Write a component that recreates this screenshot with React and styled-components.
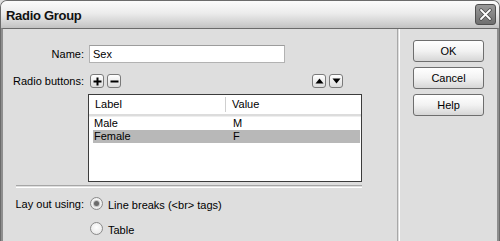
import React from 'react'
import styled, { createGlobalStyle, css } from 'styled-components'

const GlobalStyle = createGlobalStyle`
html, body {
    margin: 0;
    padding: 0;
    background: #dedede;
}
body {
    font-family: "Liberation Sans", Arial, sans-serif;
    font-size: 11px;
    color: #000;
}
`

const rows = [
    { label: 'Male', value: 'M' },
    { label: 'Female', value: 'F', selected: true },
]

const App = () => {
    return (
        <Window>
            <GlobalStyle />
            <TitleBar>
                <Title>Radio Group</Title>
                <CloseButton>
                    <svg width="13" height="13" viewBox="0 0 13 13">
                        <path d="M2 2 L11 11 M11 2 L2 11" stroke="#4a4a4a" strokeWidth="3.4" strokeLinecap="round" />
                        <path d="M2 2 L11 11 M11 2 L2 11" stroke="#fff" strokeWidth="1.8" strokeLinecap="round" />
                    </svg>
                </CloseButton>
            </TitleBar>
            <Body>
                <Main>
                    <FieldRow>
                        <Label>Name:</Label>
                        <TextInput value="Sex" readOnly />
                    </FieldRow>
                    <FieldRow $top={11}>
                        <Label>Radio buttons:</Label>
                        <Tools>
                            <ToolButton>
                                <svg width="9" height="9" viewBox="0 0 9 9">
                                    <path d="M4.5 0.5 V8.5 M0.5 4.5 H8.5" stroke="#000" strokeWidth="2" />
                                </svg>
                            </ToolButton>
                            <ToolButton>
                                <svg width="9" height="9" viewBox="0 0 9 9">
                                    <path d="M0.5 4.5 H8.5" stroke="#000" strokeWidth="2" />
                                </svg>
                            </ToolButton>
                            <ToolSpacer />
                            <ToolButton>
                                <svg width="9" height="6" viewBox="0 0 9 6">
                                    <path d="M0.5 5.5 L4.5 0.5 L8.5 5.5 Z" fill="#000" />
                                </svg>
                            </ToolButton>
                            <ToolButton>
                                <svg width="9" height="6" viewBox="0 0 9 6">
                                    <path d="M0.5 0.5 L4.5 5.5 L8.5 0.5 Z" fill="#000" />
                                </svg>
                            </ToolButton>
                        </Tools>
                    </FieldRow>
                    <ListBox>
                        <ListHeader>
                            <HeaderCell $width={137}>Label</HeaderCell>
                            <HeaderCell>Value</HeaderCell>
                        </ListHeader>
                        {rows.map(row => (
                            <ListRow key={row.label} $selected={row.selected}>
                                <Cell $width={139}>{row.label}</Cell>
                                <Cell>{row.value}</Cell>
                            </ListRow>
                        ))}
                    </ListBox>
                    <Divider />
                    <OptionRow $top={9}>
                        <Label>Lay out using:</Label>
                        <Radio $checked />
                        <OptionText>Line breaks (&lt;br&gt; tags)</OptionText>
                    </OptionRow>
                    <OptionRow $top={12}>
                        <Label />
                        <Radio />
                        <OptionText>Table</OptionText>
                    </OptionRow>
                </Main>
                <VSeparator />
                <Side>
                    <DialogButton>OK</DialogButton>
                    <DialogButton>Cancel</DialogButton>
                    <DialogButton>Help</DialogButton>
                </Side>
            </Body>
        </Window>
    )
}

export default App

const Window = styled.div`
width: 500px;
height: 241px;
box-sizing: border-box;
border: 1px solid #6b6b6b;
border-bottom: none;
border-radius: 7px 7px 0 0;
overflow: hidden;
display: flex;
flex-direction: column;
background: #dedede;
`
const TitleBar = styled.div`
height: 27px;
flex-shrink: 0;
display: flex;
align-items: center;
justify-content: space-between;
padding: 0 3px 0 5px;
background: linear-gradient(#fbfbfb, #ececec 45%, #cfcfcf 85%, #c2c2c2);
`
const Title = styled.div`
font-weight: bold;
font-size: 13px;
letter-spacing: -0.3px;
color: #111;
margin-top: 1px;
`
const CloseButton = styled.div`
width: 21px;
height: 21px;
box-sizing: border-box;
border: 1px solid #4f4f4f;
border-radius: 3px;
background: linear-gradient(#9a9a9a, #6f6f6f);
display: flex;
align-items: center;
justify-content: center;
`
const Body = styled.div`
flex: 1;
display: flex;
border-top: 1px solid #6b6b6b;
border-left: 2px solid #8e8e8e;
border-right: 2px solid #8e8e8e;
`
const Main = styled.div`
width: 394px;
padding-top: 16px;
display: flex;
flex-direction: column;
`
const rowBase = css`
display: flex;
align-items: center;
margin-top: ${p => p.$top || 0}px;
`
const FieldRow = styled.div`
${rowBase}
`
const OptionRow = styled.div`
${rowBase}
height: 13px;
`
const Label = styled.div`
width: 81px;
flex-shrink: 0;
text-align: right;
margin-right: 4px;
white-space: nowrap;
`
const TextInput = styled.input`
width: 196px;
height: 18px;
box-sizing: border-box;
margin: 0 0 0 1px;
padding: 0 3px;
border: 1px solid #b2b2b2;
border-top-color: #9c9c9c;
background: #fff;
font: inherit;
outline: none;
`
const Tools = styled.div`
width: 253px;
display: flex;
gap: 3px;
margin-left: 2px;
`
const ToolSpacer = styled.div`
flex: 1;
`
const ToolButton = styled.div`
width: 14px;
height: 14px;
box-sizing: border-box;
border: 1px solid #7a7a7a;
border-radius: 3px;
background: linear-gradient(#ffffff, #dcdcdc);
display: flex;
align-items: center;
justify-content: center;
`
const ListBox = styled.div`
margin: 6px 0 0 85px;
width: 274px;
height: 88px;
box-sizing: border-box;
border: 1px solid #3c3c3c;
background: #fff;
`
const ListHeader = styled.div`
height: 19px;
display: flex;
align-items: center;
border-bottom: 2px solid #dcdcdc;
box-shadow: 0 1px 0 #eeeeee;
margin-bottom: 1px;
`
const HeaderCell = styled.div`
box-sizing: border-box;
${p => p.$width && `width: ${p.$width}px;`}
padding-left: 6px;
height: 15px;
line-height: 15px;
${p => p.$width && 'border-right: 1px solid #cfcfcf;'}
`
const ListRow = styled.div`
display: flex;
height: 13px;
line-height: 13px;
margin: 0 1px 0 4px;
background: ${p => p.$selected ? '#b8b8b8' : 'transparent'};
`
const Cell = styled.div`
box-sizing: border-box;
${p => p.$width && `width: ${p.$width}px;`}
padding-left: 1px;
`
const Divider = styled.div`
margin: 3px 0 0 13px;
width: 346px;
height: 1px;
border-top: 1px solid #a6a6a6;
border-bottom: 1px solid #ffffff;
`
const Radio = styled.div`
width: 13px;
height: 13px;
box-sizing: border-box;
margin-left: 2px;
border-radius: 50%;
border: 1px solid #8a8a8a;
background: radial-gradient(circle at 50% 40%, #ffffff, #e2e2e2);
display: flex;
align-items: center;
justify-content: center;
&::after {
    content: '';
    display: ${p => p.$checked ? 'block' : 'none'};
    width: 5px;
    height: 5px;
    border-radius: 50%;
    background: #6a6a6a;
    box-shadow: 0 0 0 1px #c4c4c4;
}
`
const OptionText = styled.div`
margin-left: 5px;
margin-top: 2px;
`
const VSeparator = styled.div`
width: 1px;
border-left: 1px solid #a8a8a8;
border-right: 1px solid #ffffff;
`
const Side = styled.div`
flex: 1;
padding: 11px 0 0 13px;
display: flex;
flex-direction: column;
gap: 5px;
`
const DialogButton = styled.div`
width: 71px;
height: 22px;
box-sizing: border-box;
border: 1px solid #6e6e6e;
border-radius: 3px;
background: linear-gradient(#ffffff, #f2f2f2 50%, #d6d6d6);
display: flex;
align-items: center;
justify-content: center;
`
